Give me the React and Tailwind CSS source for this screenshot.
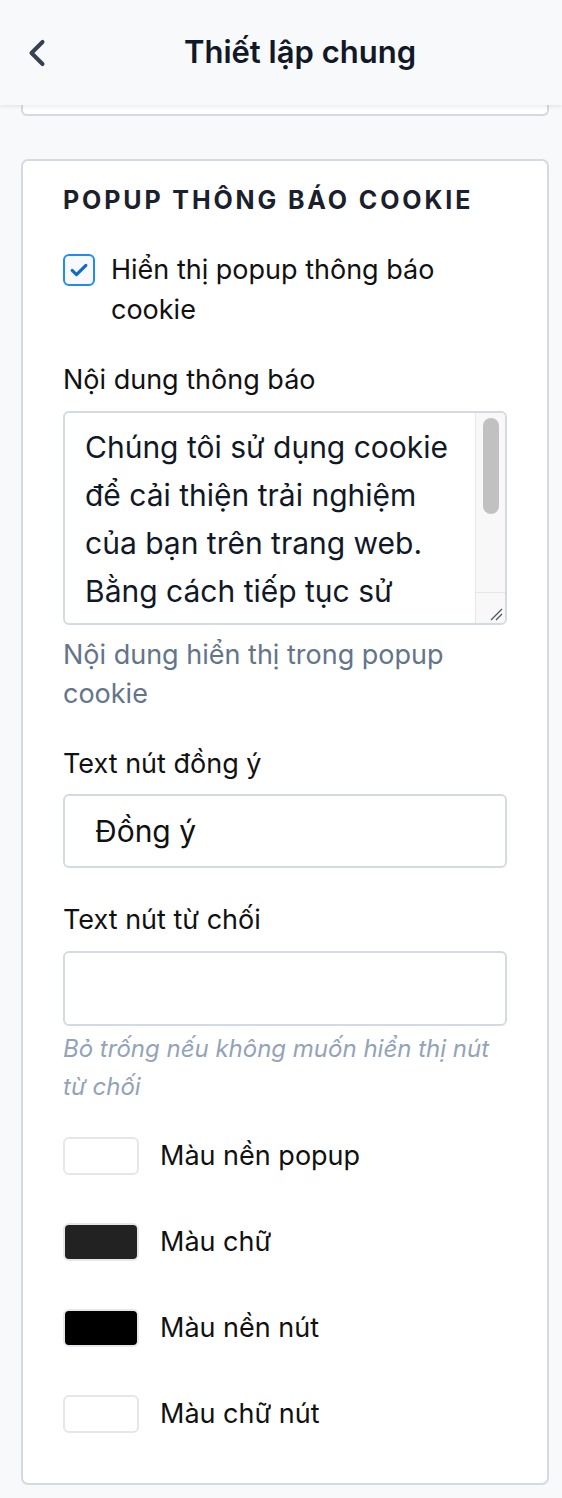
import React from "react";
import { ChevronLeft } from "lucide-react";

const swatches = [
  { color: "bg-white", label: "Màu nền popup" },
  { color: "bg-[#222222]", label: "Màu chữ" },
  { color: "bg-black", label: "Màu nền nút" },
  { color: "bg-white", label: "Màu chữ nút" },
];

const App = () => {
  return (
    <div className="min-h-screen bg-[#f8f9fb] font-['Inter','Noto_Sans',sans-serif] text-[#111111]">
      {/* Header */}
      <div className="relative z-10 h-[105px] bg-[#f8f9fb] shadow-[0_2px_4px_rgba(0,0,0,0.08)] flex items-center px-[15px]">
        <ChevronLeft className="w-[44px] h-[44px] text-[#374151]" strokeWidth={2.2} />
        <h1 className="absolute left-[38px] right-0 text-center text-[31px] font-semibold text-[#111827] pointer-events-none">
          Thiết lập chung
        </h1>
      </div>

      <div className="pl-[21px] pr-[13px] pb-[13px]">
        {/* Previous card (scrolled) */}
        <div className="h-[11px] bg-white border-x-2 border-b-2 border-[#d3dae2] rounded-b-[6px]"></div>

        {/* Cookie popup card */}
        <div className="mt-[43px] bg-white border-2 border-[#d3dae2] rounded-[7px] px-[40px] pt-[23px] pb-[49px]">
          <h2 className="text-[25px] leading-[32px] font-bold uppercase tracking-[0.115em] text-[#1a202c]">
            Popup thông báo cookie
          </h2>

          <div className="mt-[34px] flex items-start gap-[16px]">
            <div className="mt-[4px] w-[32px] h-[32px] shrink-0 rounded-[6px] border-2 border-[#1f8bf3] bg-[#f7f9fc] flex items-center justify-center">
              <svg viewBox="0 0 24 24" className="w-[22px] h-[22px]" fill="none" stroke="#0d6cc4" strokeWidth="3.4" strokeLinecap="round" strokeLinejoin="round">
                <path d="M4.5 12.5l4.8 4.5L19.5 7" />
              </svg>
            </div>
            <p className="text-[27px] leading-[40px]">Hiển thị popup thông báo cookie</p>
          </div>

          <label className="block mt-[30px] text-[27px] leading-[40px]">Nội dung thông báo</label>
          <div className="mt-[11px] h-[214px] flex border-2 border-[#d3dae2] rounded-[6px] overflow-hidden">
            <div className="flex-1 pl-[20px] pr-[8px] pt-[10px]">
              <div className="h-[192px] overflow-hidden text-[30px] leading-[48px] text-[#111827]">
                Chúng tôi sử dụng cookie để cải thiện trải nghiệm của bạn trên trang web. Bằng cách tiếp tục sử dụng trang web, bạn đồng ý với việc sử dụng cookie.
              </div>
            </div>
            <div className="w-[30px] shrink-0 bg-[#f8f8f8] border-l border-[#e6e6e6] flex flex-col">
              <div className="flex-1 pt-[5px] flex justify-center">
                <div className="w-[16px] h-[96px] rounded-full bg-[#c1c1c1]"></div>
              </div>
              <div className="h-[31px] border-t border-[#e6e6e6] flex items-end justify-end p-[2px]">
                <svg viewBox="0 0 14 14" className="w-[14px] h-[14px]" stroke="#555" strokeWidth="1.3">
                  <path d="M2 13L13 2M7 13L13 7" />
                </svg>
              </div>
            </div>
          </div>
          <p className="mt-[10px] text-[27px] leading-[39px] text-[#64748b]">Nội dung hiển thị trong popup cookie</p>

          <label className="block mt-[31px] text-[27px] leading-[40px]">Text nút đồng ý</label>
          <div className="mt-[10px] h-[74px] border-2 border-[#d3dae2] rounded-[6px] flex items-center px-[30px] text-[30px]">
            Đồng ý
          </div>

          <label className="block mt-[32px] text-[27px] leading-[40px]">Text nút từ chối</label>
          <div className="mt-[11px] h-[75px] border-2 border-[#d3dae2] rounded-[6px]"></div>
          <p className="mt-[4px] text-[24px] leading-[38px] italic text-[#94a3b8]">Bỏ trống nếu không muốn hiển thị nút từ chối</p>

          <div className="mt-[30px] flex flex-col gap-[46px]">
            {swatches.map((s) => (
              <div key={s.label} className="h-[40px] flex items-center gap-[21px]">
                <div className={`w-[76px] h-[38px] rounded-[6px] border-2 border-[#e5e7eb] ${s.color}`}></div>
                <span className="text-[27px]">{s.label}</span>
              </div>
            ))}
          </div>
        </div>
      </div>
    </div>
  );
};

export default App;
